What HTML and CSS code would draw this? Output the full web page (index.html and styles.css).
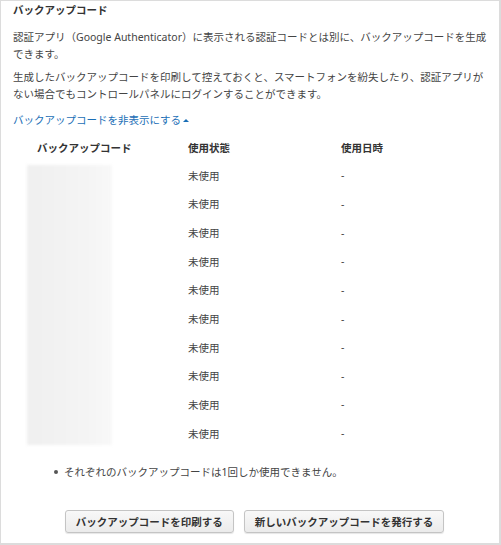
FILE: index.html
```html
<!DOCTYPE html>
<html lang="ja">
<head>
    <meta charset="UTF-8">
    <title>バックアップコード</title>
    <link rel="stylesheet" href="styles.css">
</head>
<body>
    <div class="panel">
        <h2 class="panel-title">バックアップコード</h2>
        <p class="desc">認証アプリ（Google Authenticator）に表示される認証コードとは別に、バックアップコードを生成できます。</p>
        <p class="desc">生成したバックアップコードを印刷して控えておくと、スマートフォンを紛失したり、認証アプリがない場合でもコントロールパネルにログインすることができます。</p>
        <a class="toggle" href="#">バックアップコードを非表示にする<span class="caret"></span></a>

        <div class="codes">
            <div class="th th-code">バックアップコード</div>
            <div class="th">使用状態</div>
            <div class="th">使用日時</div>

            <div class="code-blur"></div>
            <div class="td">未使用</div><div class="td">-</div>
            <div class="td">未使用</div><div class="td">-</div>
            <div class="td">未使用</div><div class="td">-</div>
            <div class="td">未使用</div><div class="td">-</div>
            <div class="td">未使用</div><div class="td">-</div>
            <div class="td">未使用</div><div class="td">-</div>
            <div class="td">未使用</div><div class="td">-</div>
            <div class="td">未使用</div><div class="td">-</div>
            <div class="td">未使用</div><div class="td">-</div>
            <div class="td">未使用</div><div class="td">-</div>
        </div>

        <ul class="notes">
            <li>それぞれのバックアップコードは1回しか使用できません。</li>
        </ul>

        <div class="actions">
            <button type="button">バックアップコードを印刷する</button>
            <button type="button">新しいバックアップコードを発行する</button>
        </div>
    </div>
</body>
</html>
```

FILE: styles.css
```css
html, body {
    margin: 0;
    padding: 0;
    background: #fff;
}

body {
    font-family: "Noto Sans", "Noto Sans CJK JP", sans-serif;
    font-size: 10.5px;
    color: #444;
}

.panel {
    box-sizing: border-box;
    width: 501px;
    height: 545px;
    border: 1px solid #dcdcdc;
    border-right-width: 2px;
    border-bottom-width: 2px;
    padding: 1px 11px 0 12px;
}

.panel-title {
    margin: 0;
    font-size: 10.5px;
    font-weight: 700;
    color: #333;
    line-height: 16px;
}

.desc {
    margin: 11px 0 0;
    line-height: 17px;
}

.desc + .desc {
    margin-top: 6px;
}

.toggle {
    display: inline-block;
    margin-top: 9px;
    color: #1a6eb6;
    text-decoration: none;
    line-height: 16px;
}

.caret {
    display: inline-block;
    margin-left: 2px;
    width: 0;
    height: 0;
    border-left: 3px solid transparent;
    border-right: 3px solid transparent;
    border-bottom: 3px solid #1a6eb6;
    vertical-align: 2px;
}

.codes {
    display: grid;
    grid-template-columns: 175px 153px 1fr;
    grid-template-rows: 28px repeat(10, 28.65px);
    margin-top: 5px;
    align-items: center;
}

.th {
    font-weight: 700;
    color: #333;
}

.th-code {
    padding-left: 24px;
}

.code-blur {
    grid-column: 1;
    grid-row: 2 / span 10;
    align-self: stretch;
    margin: 4px 76px 2px 14px;
    background: linear-gradient(90deg, #efefef, #f4f4f4 70%, #f8f8f8);
    filter: blur(1.5px);
}

.notes {
    margin: 17px 0 0;
    padding-left: 51px;
    list-style: none;
}

.notes li {
    position: relative;
    line-height: 16px;
}

.notes li::before {
    content: "";
    position: absolute;
    left: -10px;
    top: 6px;
    width: 4px;
    height: 4px;
    border-radius: 50%;
    background: #555;
}

.actions {
    display: flex;
    justify-content: center;
    gap: 10px;
    margin-top: 30px;
    padding-left: 8px;
}

.actions button {
    height: 23px;
    padding: 0 10px;
    font-family: inherit;
    font-size: 10.5px;
    font-weight: 700;
    color: #333;
    background: linear-gradient(#f8f8f8, #ebebeb);
    border: 1px solid #c4c4c4;
    border-radius: 3px;
    box-shadow: 0 1px 1px rgba(0, 0, 0, 0.1);
    cursor: pointer;
}
```
